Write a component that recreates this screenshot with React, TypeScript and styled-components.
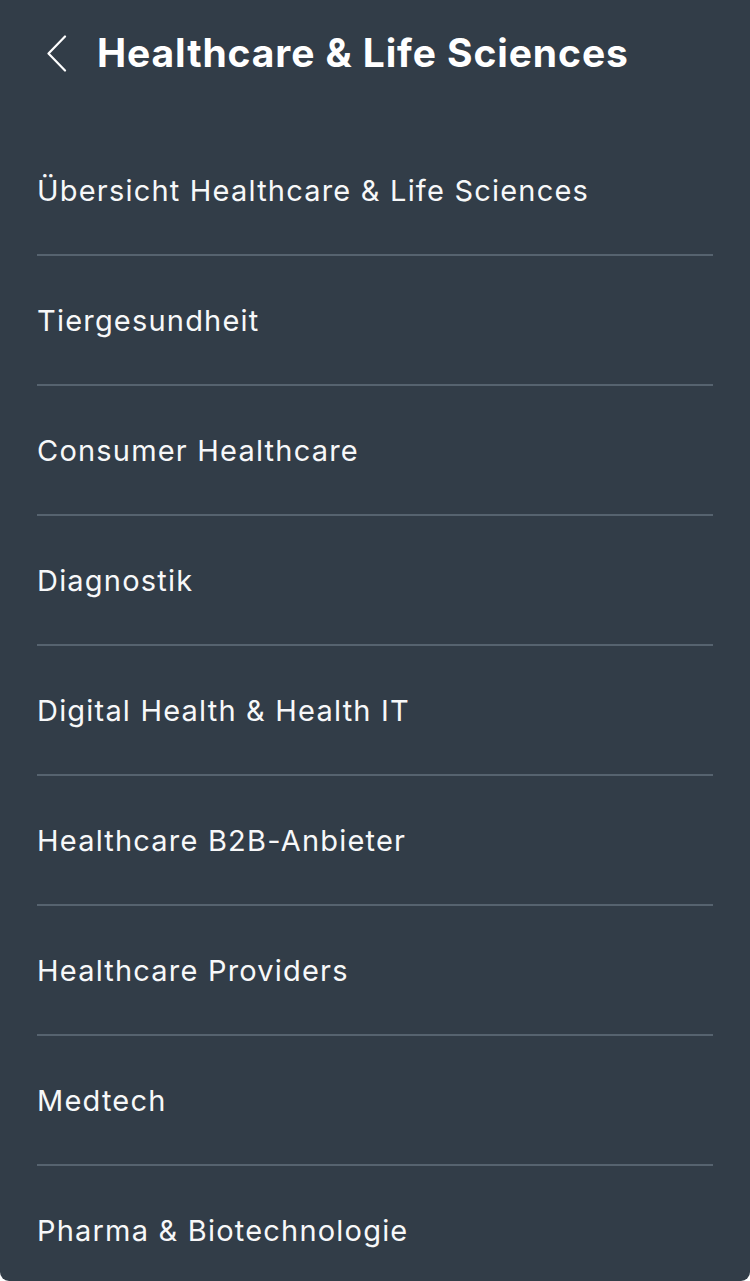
import styled, { createGlobalStyle } from 'styled-components';

const items = [
  'Übersicht Healthcare & Life Sciences',
  'Tiergesundheit',
  'Consumer Healthcare',
  'Diagnostik',
  'Digital Health & Health IT',
  'Healthcare B2B-Anbieter',
  'Healthcare Providers',
  'Medtech',
  'Pharma & Biotechnologie',
];

function App() {
  return (
    <>
      <GlobalStyle />
      <Panel>
        <Header>
          <BackButton aria-label="Zurück">
            <svg width="22" height="37" viewBox="0 0 22 37" fill="none">
              <path d="M19 1.5 L2.5 18.5 L19 35.5" stroke="#ffffff" strokeWidth="2.2" strokeLinecap="round" strokeLinejoin="round" />
            </svg>
          </BackButton>
          <Title>Healthcare &amp; Life Sciences</Title>
        </Header>
        <List>
          {items.map((label, i) => (
            <Item key={label} $last={i === items.length - 1}>
              {label}
            </Item>
          ))}
        </List>
      </Panel>
    </>
  );
}

const GlobalStyle = createGlobalStyle`
  body {
    margin: 0;
    background: #ffffff;
    font-family: Inter, "Noto Sans", sans-serif;
  }
`;

const Panel = styled.div`
  width: 750px;
  height: 1281px;
  overflow: hidden;
  background: #323d48;
  border-radius: 0 0 9px 9px;
  color: #ffffff;
`;

const Header = styled.div`
  height: 126px;
  display: flex;
  align-items: flex-start;
  padding: 35px 0 0 46px;
  box-sizing: border-box;
  gap: 29px;
`;

const BackButton = styled.button`
  background: none;
  border: none;
  padding: 0;
  display: flex;
  cursor: pointer;
`;

const Title = styled.h1`
  margin: -4px 0 0;
  font-size: 39px;
  font-weight: 700;
  letter-spacing: 0.9px;
  line-height: 44px;
`;

const List = styled.ul`
  list-style: none;
  margin: 0;
  padding: 0 37px;
`;

const Item = styled.li<{ $last: boolean }>`
  height: 128px;
  display: flex;
  align-items: center;
  font-size: 29px;
  font-weight: 400;
  letter-spacing: 1.2px;
  color: #f7f8f9;
  border-bottom: ${(p) => (p.$last ? 'none' : '2px solid #56636f')};
`;

export default App;
